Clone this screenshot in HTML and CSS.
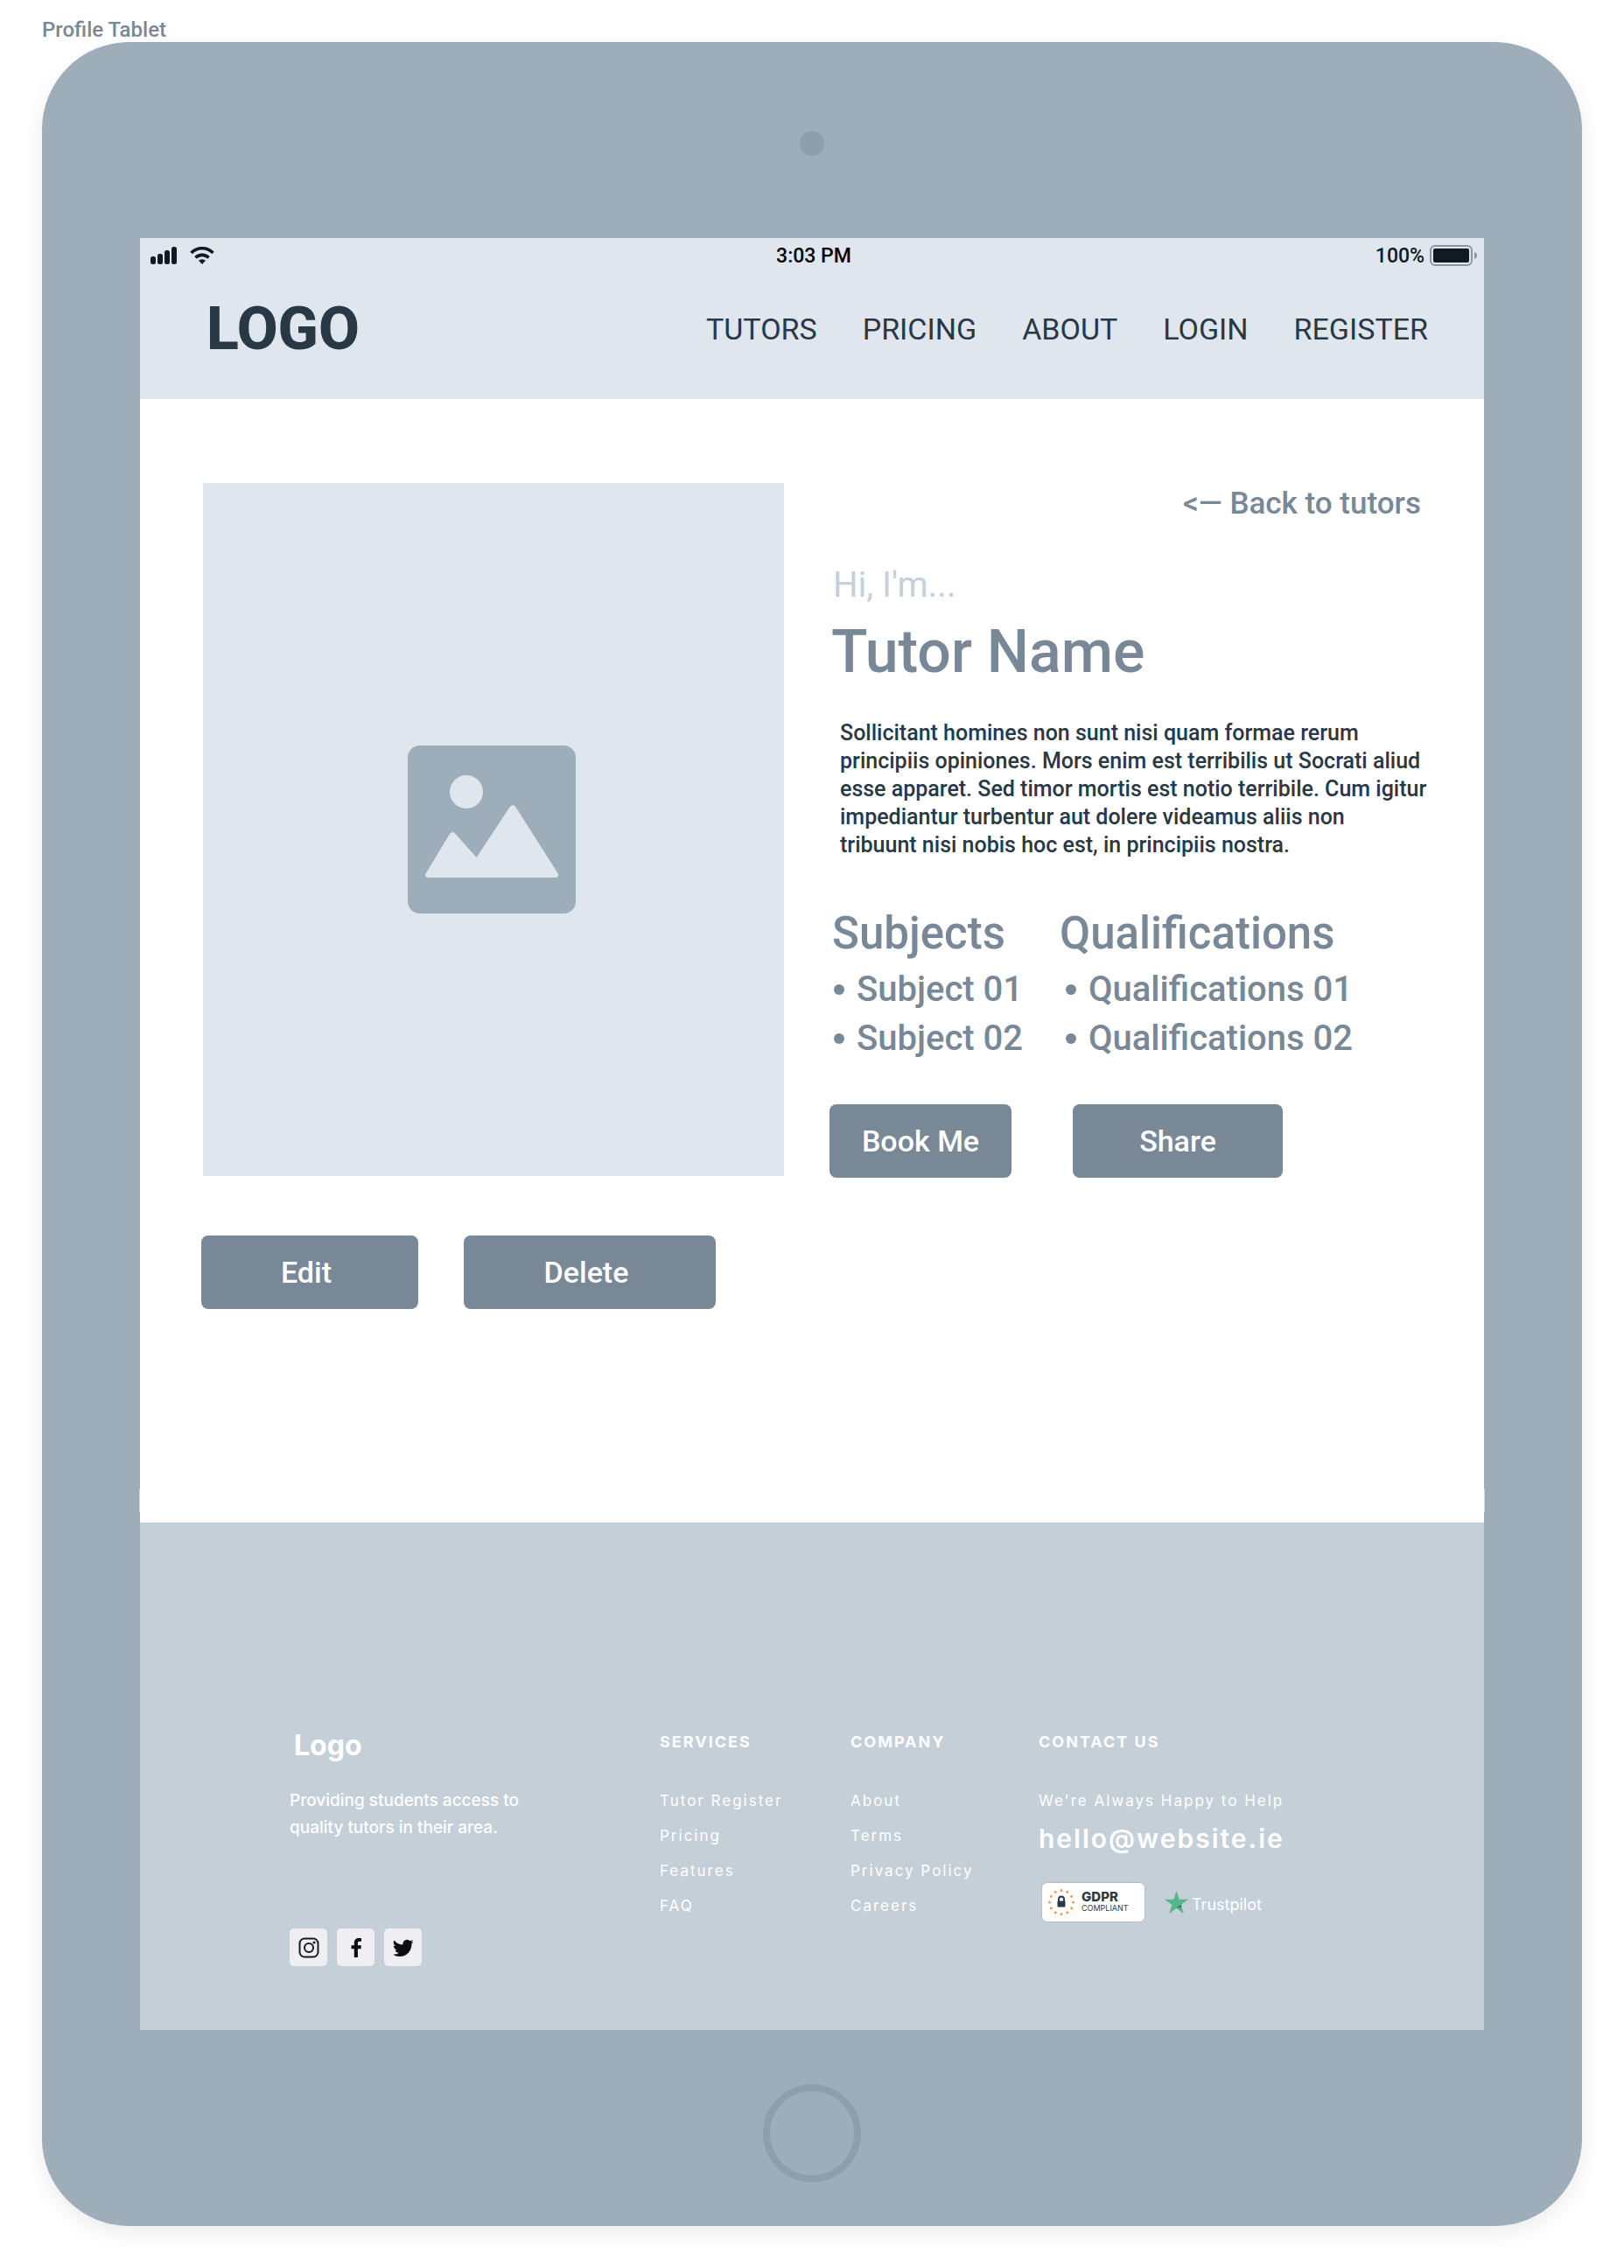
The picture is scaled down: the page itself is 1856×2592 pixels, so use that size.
FILE: index.html
```html
<!DOCTYPE html>
<html lang="en">
<head>
<meta charset="utf-8">
<title>Profile Tablet</title>
<link rel="stylesheet" href="styles.css">
</head>
<body>
<div class="frame-title">Profile Tablet</div>
<div class="device">
  <div class="bezel bezel-top"><span class="camera"></span></div>
  <div class="screen">
    <header class="top">
      <div class="status">
        <div class="status-side">
          <svg class="signal" viewBox="0 0 30 20"><g fill="#111a22"><rect x="0" y="11" width="6" height="9" rx="2.500"/><rect x="8" y="8" width="6" height="12" rx="2.500"/><rect x="16" y="4" width="6" height="16" rx="2.500"/><rect x="24" y="0" width="6" height="20" rx="2.500"/></g></svg>
          <svg class="wifi" viewBox="0 0 28 20"><g fill="none" stroke="#111a22" stroke-width="3.600"><path d="M1.500 7A17.500 17.500 0 0 1 26.500 7"/><path d="M6.500 12.500A10.500 10.500 0 0 1 21.500 12.500"/></g><path d="M14 20l-4-4.200a6 6 0 0 1 8 0z" fill="#111a22"/></svg>
        </div>
        <div class="clock">3:03 PM</div>
        <div class="status-side status-right">
          <span>100%</span>
          <svg class="battery" viewBox="0 0 54 24"><rect x="1" y="1" width="47" height="22" rx="5" fill="none" stroke="#8c979f" stroke-width="2"/><rect x="4" y="4" width="41" height="16" rx="2" fill="#111a22"/><path d="M51 8q3 1 3 4t-3 4z" fill="#8c979f"/></svg>
        </div>
      </div>
      <div class="nav-row">
        <div class="brand">LOGO</div>
        <nav class="nav">
          <a href="#">TUTORS</a><a href="#">PRICING</a><a href="#">ABOUT</a><a href="#">LOGIN</a><a href="#">REGISTER</a>
        </nav>
      </div>
    </header>
    <main class="profile">
      <div class="columns">
        <div class="photo">
          <svg viewBox="0 0 192 192"><rect width="192" height="192" rx="14" fill="#9dadb9"/><circle cx="67" cy="53" r="19" fill="#dfe6ee"/><path d="M20.500 146.500L48 101Q51 97 54.500 101L78.600 128L116.500 70.500Q120 65.500 123.500 70.500L171.500 146Q173.500 150 169 151H24Q19 150.500 20.500 146.500z" fill="#dfe6ee"/></svg>
        </div>
        <div class="details">
          <a class="back" href="#">&lt;— Back to tutors</a>
          <p class="hello">Hi, I'm...</p>
          <h1>Tutor Name</h1>
          <p class="bio">Sollicitant homines non sunt nisi quam formae rerum<br>principiis opiniones. Mors enim est terribilis ut Socrati aliud<br>esse apparet. Sed timor mortis est notio terribile. Cum igitur<br>impediantur turbentur aut dolere videamus aliis non<br>tribuunt nisi nobis hoc est, in principiis nostra.</p>
          <div class="lists">
            <section><h2>Subjects</h2><ul><li>Subject 01</li><li>Subject 02</li></ul></section>
            <section><h2>Qualifications</h2><ul class="inset"><li>Qualifications 01</li><li>Qualifications 02</li></ul></section>
          </div>
          <div class="actions">
            <button class="btn book" type="button">Book Me</button>
            <button class="btn share" type="button">Share</button>
          </div>
        </div>
      </div>
      <div class="manage">
        <button class="btn edit" type="button">Edit</button>
        <button class="btn delete" type="button">Delete</button>
      </div>
    </main>
    <footer class="footer">
      <div class="about">
        <div class="footer-logo">Logo</div>
        <p class="tagline">Providing students access to quality tutors in their area.</p>
        <div class="social">
          <a href="#" aria-label="Instagram"><svg viewBox="0 0 24 24"><g fill="none" stroke="#1b1b1d" stroke-width="2"><rect x="1.500" y="1.500" width="21" height="21" rx="5.500"/><circle cx="12" cy="12" r="5"/></g><circle cx="18" cy="6" r="1.600" fill="#1b1b1d"/></svg></a>
          <a href="#" aria-label="Facebook"><svg viewBox="0 0 24 24"><path d="M9.800 23V13.200H6.500V9.300h3.300V6.500c0-3.600 2-5.500 5.300-5.500 1.300 0 2.500.1 2.900.2v3.600h-2c-1.700 0-2.100.8-2.100 2v2.500h4l-.5 3.900h-3.500V23z" fill="#0d0d0f"/></svg></a>
          <a href="#" aria-label="Twitter"><svg viewBox="0 0 24 24"><path d="M23.600 4.900a9.700 9.700 0 0 1-2.800.8 4.900 4.900 0 0 0 2.100-2.700 9.700 9.700 0 0 1-3.100 1.200 4.900 4.900 0 0 0-8.300 4.400A13.800 13.800 0 0 1 1.500 3.500 4.900 4.900 0 0 0 3 10a4.800 4.800 0 0 1-2.200-.6c0 2.400 1.600 4.400 3.900 4.900a4.900 4.900 0 0 1-2.200.1 4.900 4.900 0 0 0 4.600 3.400A9.900 9.900 0 0 1 0 19.800 13.900 13.900 0 0 0 7.500 22c9.100 0 14.300-7.700 13.900-14.600a10 10 0 0 0 2.200-2.500z" fill="#0d0d0f"/></svg></a>
        </div>
      </div>
      <nav class="links services" aria-label="Services">
        <h3>SERVICES</h3>
        <a href="#">Tutor Register</a><a href="#">Pricing</a><a href="#">Features</a><a href="#">FAQ</a>
      </nav>
      <nav class="links company" aria-label="Company">
        <h3>COMPANY</h3>
        <a href="#">About</a><a href="#">Terms</a><a href="#">Privacy Policy</a><a href="#">Careers</a>
      </nav>
      <section class="links contact">
        <h3>CONTACT US</h3>
        <p>We're Always Happy to Help</p>
        <a class="mail" href="mailto:hello@website.ie">hello@website.ie</a>
        <div class="badges">
          <div class="gdpr">
            <svg viewBox="0 0 32 32"><circle cx="16" cy="16" r="13.500" fill="none" stroke="#ee9a58" stroke-width="3" stroke-linecap="round" pathLength="120" stroke-dasharray="0 10"/><path d="M13 15v-2.500a3 3 0 0 1 6 0V15" fill="none" stroke="#2b3a47" stroke-width="2"/><rect x="11.500" y="14.500" width="9" height="7" rx="1" fill="#2b3a47"/></svg>
            <div><strong>GDPR</strong><span>COMPLIANT</span></div>
          </div>
          <div class="trust">
            <svg viewBox="0 0 27 26"><path d="M13.500 0l3.200 9.800H27l-8.300 6.100L21.800 26l-8.300-6.200L5.200 26l3.100-10.100L0 9.800h10.300z" fill="#52b788"/><path d="M13.500 19.800l5.900-1.600-.8-2.300z" fill="#2b6b58"/></svg>
            <span>Trustpilot</span>
          </div>
        </div>
      </section>
    </footer>
  </div>
  <div class="bezel bezel-bottom"><span class="home"></span></div>
</div>
</body>
</html>
```
FILE: styles.css
```css
* { box-sizing: border-box; }
body { margin: 0; padding: 8px 48px 48px; background: #fff; font-family: Roboto, "Open Sans", sans-serif; color: #788896; }
h1, h2, h3, p, ul { margin: 0; padding: 0; font-weight: 500; }
a { color: inherit; text-decoration: none; }
svg { display: block; }
.frame-title { height: 40px; font-size: 24px; font-weight: 500; line-height: 52px; }
.device { padding: 0 112px; border-radius: 100px; background: #9dadb9; box-shadow: 0 8px 24px rgba(0, 0, 0, .08); }
.bezel { display: flex; justify-content: center; align-items: center; height: 224px; }
.bezel-bottom { padding-top: 12px; }
.camera { width: 28px; height: 28px; margin-top: 8px; border-radius: 50%; background: #8f9eac; }
.home { width: 112px; height: 112px; border: 8px solid #8f9eac; border-radius: 50%; }
.screen { background: #fff; }

.top { height: 184px; background: #dfe6ee; }
.status { display: flex; align-items: center; height: 40px; padding: 0 8px 0 12px; font-size: 23px; font-weight: 500; color: #111a22; }
.status-side { flex: 1; display: flex; align-items: center; gap: 15px; }
.status-right { justify-content: flex-end; gap: 6px; }
.clock { color: #000; }
.signal { width: 30px; height: 20px; }
.wifi { width: 28px; height: 20px; }
.battery { width: 54px; height: 24px; }
.nav-row { display: flex; justify-content: space-between; align-items: center; height: 128px; padding: 0 64px 0 76px; color: #293845; }
.brand { font-size: 68px; font-weight: 800; }
.nav { display: flex; gap: 52px; font-size: 34px; }

.profile { position: relative; padding: 96px 60px 244px 70px; }
/* faint highlight where the glass meets the bezel */
.profile::before { content: ""; position: absolute; right: -1px; bottom: 12px; left: -1px; height: 26px; border: solid #d3d8dd; border-width: 0 1px; }
.columns { display: flex; gap: 52px; padding-left: 2px; }
.photo { display: flex; justify-content: center; align-items: center; width: 664px; height: 792px; padding-right: 4px; background: #dfe6ee; }
.photo svg { width: 192px; height: 192px; }
.details { flex: 1; display: flex; flex-direction: column; }
.back { align-self: flex-end; padding-right: 12px; font-size: 35px; font-weight: 500; line-height: 48px; }
.hello { margin-top: 42px; padding-left: 4px; font-size: 40px; font-weight: 400; line-height: 54px; color: #c5d0da; }
h1 { padding-left: 2px; font-size: 68px; line-height: 98px; }
.bio { margin-top: 28px; padding-left: 12px; font-size: 25px; line-height: 32px; color: #293845; white-space: nowrap; }
.lists { display: grid; grid-template-columns: 260px 1fr; margin-top: 49px; padding-left: 3px; }
h2 { font-size: 51px; line-height: 72px; }
ul { list-style: none; }
.inset { padding-left: 5px; }
li { display: flex; align-items: center; gap: 14px; padding-left: 2px; font-size: 40px; line-height: 56px; white-space: nowrap; }
li::before { content: ""; width: 12px; height: 12px; border-radius: 50%; background: #788896; }
.actions { display: flex; gap: 70px; margin-top: auto; margin-bottom: -2px; }
.btn { height: 84px; border: 0; border-radius: 8px; background: #788896; color: #fff; font: 500 34px Roboto, "Open Sans", sans-serif; }
.book { width: 208px; }
.share { width: 240px; }
.manage { display: flex; gap: 52px; margin-top: 68px; }
.manage .btn { padding: 0 8px 0 0; }
.edit { width: 248px; }
.delete { width: 288px; }

.footer { display: grid; grid-template-columns: 423px 218px 215px 1fr; height: 580px; padding: 231px 60px 0 171px; background: #c5cfd8; color: #fff; font-family: Inter, "Open Sans", sans-serif; }
.footer-logo { padding-left: 5px; font-size: 32px; font-weight: 700; line-height: 48px; }
.tagline { width: 280px; margin-top: 23px; font-size: 19px; line-height: 31px; }
.social { display: flex; gap: 11px; margin-top: 100px; }
.social a { display: flex; justify-content: center; align-items: center; width: 43px; height: 43px; border-radius: 5px; background: #eeeef3; }
.social svg { width: 24px; height: 24px; }
.links { display: flex; flex-direction: column; font-size: 17px; line-height: 40px; letter-spacing: 2px; }
.links h3 { margin-bottom: 27px; font-size: 18px; font-weight: 700; line-height: 40px; }
.links p { font-weight: 400; }
.links .mail { font-size: 30px; font-weight: 600; line-height: 46px; }
.badges { display: flex; align-items: center; gap: 22px; margin-top: 27px; padding-left: 3px; letter-spacing: 0; }
.gdpr { display: flex; align-items: center; gap: 7px; width: 119px; height: 46px; padding-left: 6px; border: 1px solid #b4bec8; border-radius: 7px; background: #fff; color: #2b3a47; font-size: 9px; line-height: 12px; }
.gdpr svg { width: 32px; height: 32px; }
.gdpr strong { display: block; font-size: 15px; font-weight: 800; line-height: 14px; }
.trust { display: flex; align-items: center; gap: 4px; font-size: 18px; line-height: 24px; }
.trust svg { width: 27px; height: 26px; }
.trust span { padding-top: 6px; }
```
